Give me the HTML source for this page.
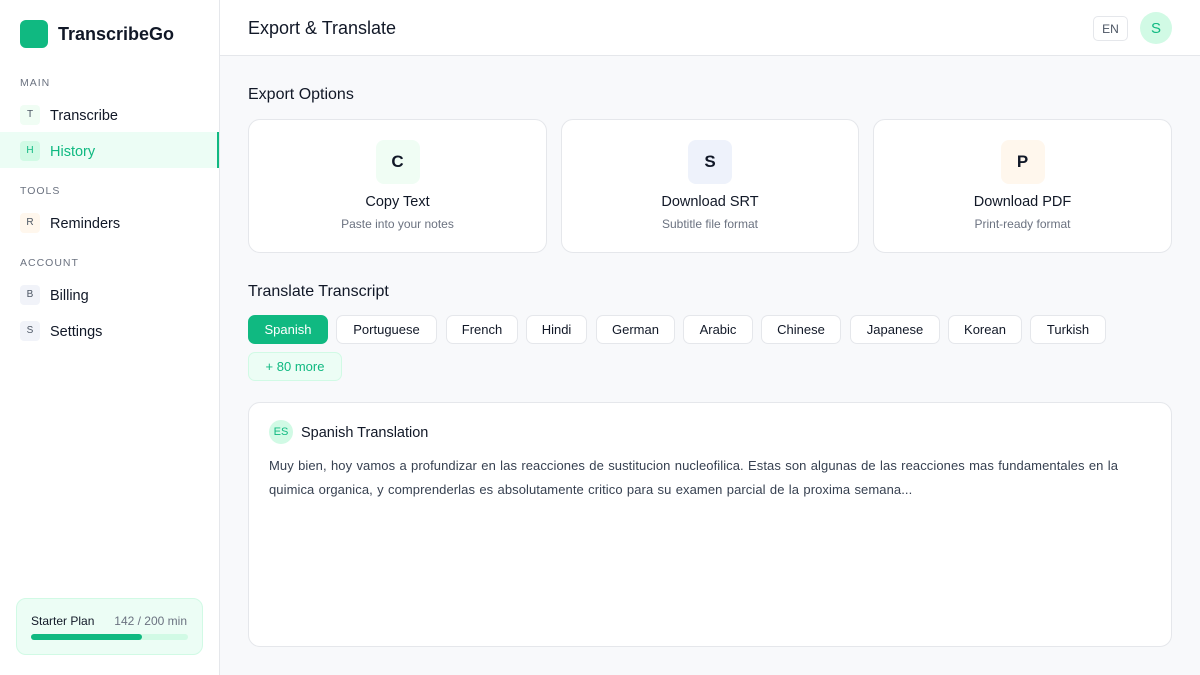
<!DOCTYPE html>
<html><head><meta charset="utf-8"><style>
*{box-sizing:border-box;margin:0;padding:0}
body{width:1200px;height:675px;overflow:hidden;font-family:"Liberation Sans",sans-serif;background:#f8f9fb;color:#111827;position:relative}
.side{position:absolute;left:0;top:0;width:220px;height:675px;background:#fff;border-right:1px solid #e5e7eb}
.logo{position:absolute;left:20px;top:20px;width:28px;height:28px;border-radius:6px;background:#10b981}
.brand{position:absolute;left:58px;top:24px;font-size:18px;font-weight:bold;color:#111827}
.sec{position:absolute;left:20px;font-size:10.5px;letter-spacing:1px;color:#6b7280}
.item{position:absolute;left:0;width:219px;height:36px;display:flex;align-items:center;padding-left:20px;padding-top:3px;font-size:14.5px;color:#111827}
.item .ic{width:20px;height:20px;border-radius:4px;font-size:10px;display:flex;align-items:center;justify-content:center;color:#4b5563;margin-right:10px;margin-top:-2px}
.item.act{background:#ecfdf5;color:#10b981;border-right:2px solid #10b981}
.plan{position:absolute;left:16px;top:598px;width:187px;height:57px;background:#ecfdf5;border:1px solid #d1fae5;border-radius:10px}
.top{position:absolute;left:220px;top:0;right:0;height:56px;background:#fff;border-bottom:1px solid #e5e7eb}
h2{position:absolute;font-size:16px;font-weight:normal;color:#111827}
.card{position:absolute;top:119px;height:134px;background:#fff;border:1px solid #e5e7eb;border-radius:12px;text-align:center}
.card .i{width:44px;height:44px;border-radius:8px;margin:20px auto 0;display:flex;align-items:center;justify-content:center;font-weight:bold;font-size:17px}
.card .t{margin-top:10px;font-size:14.5px}
.card .s{margin-top:7px;font-size:12px;color:#6b7280}
.chip{position:absolute;top:315px;height:29px;border:1px solid #e5e7eb;background:#fff;border-radius:7px;font-size:13px;display:flex;align-items:center;justify-content:center;color:#111827}
</style></head><body>
<div class="side">
<div class="logo"></div><div class="brand">TranscribeGo</div>
<div class="sec" style="top:77px">MAIN</div>
<div class="item" style="top:96px"><span class="ic" style="background:#f0fdf4">T</span>Transcribe</div>
<div class="item act" style="top:132px"><span class="ic" style="background:#d1fae5;color:#10b981">H</span>History</div>
<div class="sec" style="top:185px">TOOLS</div>
<div class="item" style="top:204px"><span class="ic" style="background:#fff7ed">R</span>Reminders</div>
<div class="sec" style="top:257px">ACCOUNT</div>
<div class="item" style="top:276px"><span class="ic" style="background:#f1f3f9">B</span>Billing</div>
<div class="item" style="top:312px"><span class="ic" style="background:#f1f3f9">S</span>Settings</div>
<div class="plan">
<div style="position:absolute;left:14px;top:15px;font-size:12px;color:#111827">Starter Plan</div>
<div style="position:absolute;right:15px;top:15px;font-size:12px;color:#6b7280">142 / 200 min</div>
<div style="position:absolute;left:14px;top:35px;width:157px;height:6px;border-radius:3px;background:#d1fae5"><div style="width:111px;height:6px;border-radius:3px;background:#10b981"></div></div>
</div>
</div>
<div class="top">
<div style="position:absolute;left:28px;top:18px;font-size:18px">Export &amp; Translate</div>
<div style="position:absolute;left:873px;top:16px;width:35px;height:25px;border:1px solid #e5e7eb;border-radius:5px;font-size:12px;color:#4b5563;display:flex;align-items:center;justify-content:center">EN</div>
<div style="position:absolute;left:920px;top:12px;width:32px;height:32px;border-radius:50%;background:#d1fae5;color:#10b981;font-size:15px;display:flex;align-items:center;justify-content:center">S</div>
</div>
<h2 style="left:248px;top:86px">Export Options</h2>
<div class="card" style="left:248px;width:299px"><div class="i" style="background:#f0fdf4">C</div><div class="t">Copy Text</div><div class="s">Paste into your notes</div></div>
<div class="card" style="left:561px;width:298px"><div class="i" style="background:#eef2fb">S</div><div class="t">Download SRT</div><div class="s">Subtitle file format</div></div>
<div class="card" style="left:873px;width:299px"><div class="i" style="background:#fff7ed">P</div><div class="t">Download PDF</div><div class="s">Print-ready format</div></div>
<h2 style="left:248px;top:283px">Translate Transcript</h2>
<div class="chip" style="left:248px;width:80px;background:#10b981;border-color:#10b981;color:#fff">Spanish</div>
<div class="chip" style="left:336px;width:101px">Portuguese</div>
<div class="chip" style="left:446px;width:72px">French</div>
<div class="chip" style="left:526px;width:61px">Hindi</div>
<div class="chip" style="left:596px;width:79px">German</div>
<div class="chip" style="left:683px;width:70px">Arabic</div>
<div class="chip" style="left:761px;width:80px">Chinese</div>
<div class="chip" style="left:850px;width:90px">Japanese</div>
<div class="chip" style="left:948px;width:74px">Korean</div>
<div class="chip" style="left:1030px;width:76px">Turkish</div>
<div class="chip" style="left:248px;top:352px;width:94px;background:#ecfdf5;border-color:#d1fae5;color:#10b981">+ 80 more</div>
<div style="position:absolute;left:248px;top:402px;width:924px;height:245px;background:#fff;border:1px solid #e5e7eb;border-radius:12px">
<div style="position:absolute;left:20px;top:17px;width:24px;height:24px;border-radius:50%;background:#d1fae5;color:#10b981;font-size:11px;display:flex;align-items:center;justify-content:center">ES</div>
<div style="position:absolute;left:52px;top:22px;font-size:14.5px">Spanish Translation</div>
<div style="position:absolute;left:20px;top:51px;width:890px;font-size:13px;letter-spacing:0.08px;word-spacing:0.6px;line-height:24px;color:#374151">Muy bien, hoy vamos a profundizar en las reacciones de sustitucion nucleofilica. Estas son algunas de las reacciones mas fundamentales en la<br>quimica organica, y comprenderlas es absolutamente critico para su examen parcial de la proxima semana...</div>
</div>
</body></html>
